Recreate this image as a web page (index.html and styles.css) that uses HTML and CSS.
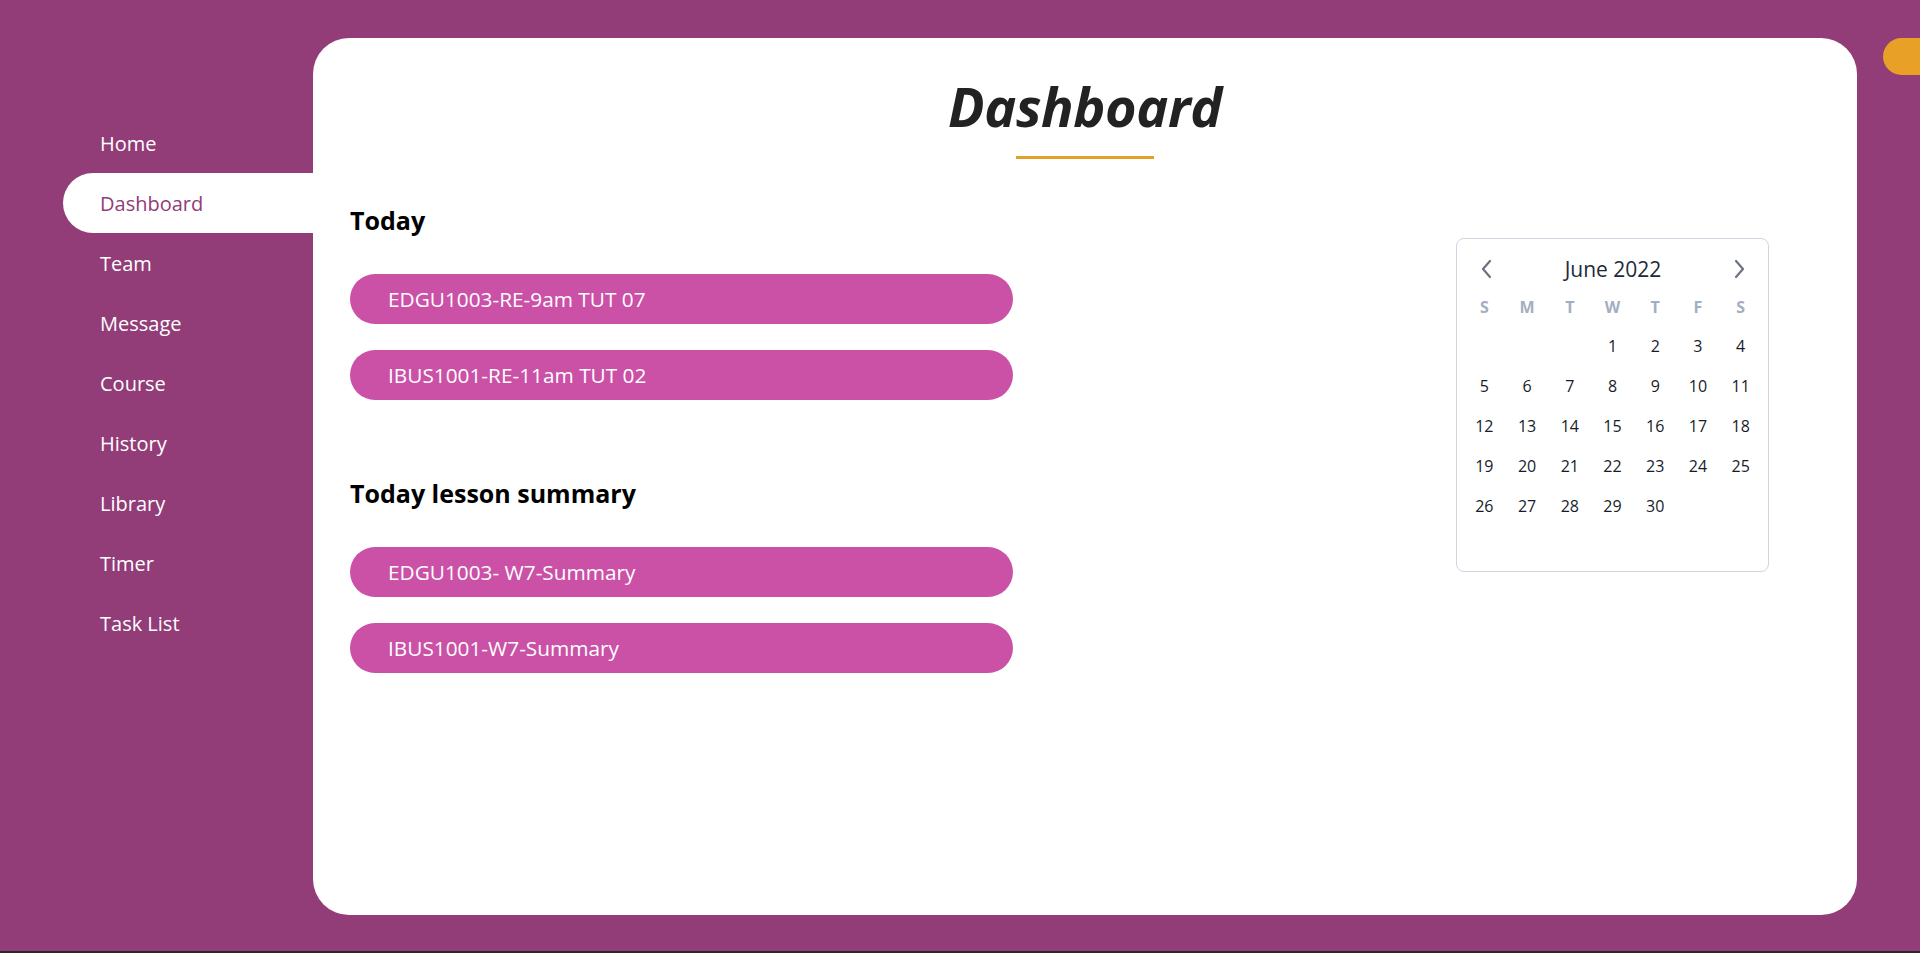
FILE: index.html
```html
<!DOCTYPE html>
<html lang="en">
<head>
<meta charset="utf-8">
<title>Dashboard</title>
<link rel="stylesheet" href="styles.css">
</head>
<body>
<div class="page">
  <nav class="sidebar">
    <a class="nav-item">Home</a>
    <a class="nav-item active">Dashboard</a>
    <a class="nav-item">Team</a>
    <a class="nav-item">Message</a>
    <a class="nav-item">Course</a>
    <a class="nav-item">History</a>
    <a class="nav-item">Library</a>
    <a class="nav-item">Timer</a>
    <a class="nav-item">Task List</a>
  </nav>
  <main class="card">
    <header class="title-wrap">
      <h1 class="title">Dashboard</h1>
      <div class="title-line"></div>
    </header>
    <div class="content">
      <div class="left-col">
        <h2 class="section-title">Today</h2>
        <div class="pill-list">
          <div class="pill">EDGU1003-RE-9am TUT 07</div>
          <div class="pill">IBUS1001-RE-11am TUT 02</div>
        </div>
        <h2 class="section-title second">Today lesson summary</h2>
        <div class="pill-list">
          <div class="pill">EDGU1003- W7-Summary</div>
          <div class="pill">IBUS1001-W7-Summary</div>
        </div>
      </div>
      <div class="calendar">
        <div class="cal-head">
          <svg class="chev" width="24" height="24" viewBox="0 0 24 24"><polyline points="15 20 8 12 15 4" fill="none" stroke="#6b7280" stroke-width="2.2" stroke-linecap="round" stroke-linejoin="round"/></svg>
          <span class="cal-month">June 2022</span>
          <svg class="chev" width="24" height="24" viewBox="0 0 24 24"><polyline points="9 4 16 12 9 20" fill="none" stroke="#6b7280" stroke-width="2.2" stroke-linecap="round" stroke-linejoin="round"/></svg>
        </div>
        <div class="cal-grid">
          <span class="dn">S</span><span class="dn">M</span><span class="dn">T</span><span class="dn">W</span><span class="dn">T</span><span class="dn">F</span><span class="dn">S</span>
          <span></span><span></span><span></span><span class="d">1</span><span class="d">2</span><span class="d">3</span><span class="d">4</span>
          <span class="d">5</span><span class="d">6</span><span class="d">7</span><span class="d">8</span><span class="d">9</span><span class="d">10</span><span class="d">11</span>
          <span class="d">12</span><span class="d">13</span><span class="d">14</span><span class="d">15</span><span class="d">16</span><span class="d">17</span><span class="d">18</span>
          <span class="d">19</span><span class="d">20</span><span class="d">21</span><span class="d">22</span><span class="d">23</span><span class="d">24</span><span class="d">25</span>
          <span class="d">26</span><span class="d">27</span><span class="d">28</span><span class="d">29</span><span class="d">30</span><span></span><span></span>
          <span class="d"></span><span></span><span></span><span></span><span></span><span></span><span></span>
        </div>
      </div>
    </div>
  </main>
  <div class="toggle"></div>
</div>
</body>
</html>
```
FILE: styles.css
```css
html {
  background: #2a2a2a;
}
body {
  margin: 0;
  height: 953px;
  overflow: hidden;
  font-family: "Open Sans", "Noto Sans", sans-serif;
}
.page {
  height: 951px;
  background: #923c78;
  display: flex;
  align-items: flex-start;
  overflow: hidden;
}
.sidebar {
  width: 250px;
  flex: none;
  padding: 113px 0 0 63px;
  display: flex;
  flex-direction: column;
}
.nav-item {
  height: 60px;
  display: flex;
  align-items: center;
  padding-left: 37px;
  color: #ffffff;
  font-size: 20px;
  border-radius: 30px 0 0 30px;
}
.nav-item.active {
  background: #ffffff;
  color: #923c78;
}
.card {
  flex: none;
  margin-top: 38px;
  width: 1544px;
  height: 877px;
  box-sizing: border-box;
  background: #ffffff;
  border-radius: 36px;
  padding: 30px 0 0 37px;
}
.title-wrap {
  display: flex;
  flex-direction: column;
  align-items: center;
  padding-right: 37px;
}
.title {
  margin: 0;
  font-size: 54px;
  line-height: 76px;
  font-weight: 700;
  font-style: italic;
  color: #222222;
  letter-spacing: -0.4px;
}
.title-line {
  margin-top: 12px;
  width: 138px;
  height: 3px;
  background: #e3a02a;
}
.content {
  display: flex;
  justify-content: space-between;
  padding-right: 88px;
}
.left-col {
  width: 663px;
  padding-top: 45px;
}
.section-title {
  margin: 0;
  font-size: 25px;
  line-height: 33px;
  font-weight: 700;
  color: #000000;
}
.section-title.second {
  margin-top: 77px;
}
.pill-list {
  margin-top: 37px;
  display: flex;
  flex-direction: column;
  gap: 26px;
}
.pill {
  height: 50px;
  border-radius: 25px;
  background: #cb51a7;
  color: #ffffff;
  font-size: 20.8px;
  display: flex;
  align-items: center;
  padding-left: 38px;
}
.calendar {
  margin-top: 79px;
  width: 313px;
  height: 334px;
  box-sizing: border-box;
  border: 1px solid #cfd6e2;
  border-radius: 8px;
  padding: 11px 6px 6px;
}
.cal-head {
  height: 38px;
  display: flex;
  align-items: center;
  justify-content: space-between;
  padding: 0 11px 0 12px;
}
.cal-month {
  font-size: 21px;
  color: #1f2937;
}
.cal-grid {
  display: grid;
  grid-template-columns: repeat(7, 1fr);
  grid-template-rows: 38px repeat(6, 40px);
  text-align: center;
  align-items: center;
}
.dn {
  font-size: 16px;
  font-weight: 700;
  color: #a3aec0;
}
.d {
  font-size: 16px;
  color: #171c2b;
}
.toggle {
  flex: none;
  margin: 38px 0 0 26px;
  width: 80px;
  height: 37px;
  border-radius: 19px 0 0 19px;
  background: #e8a126;
}
```
